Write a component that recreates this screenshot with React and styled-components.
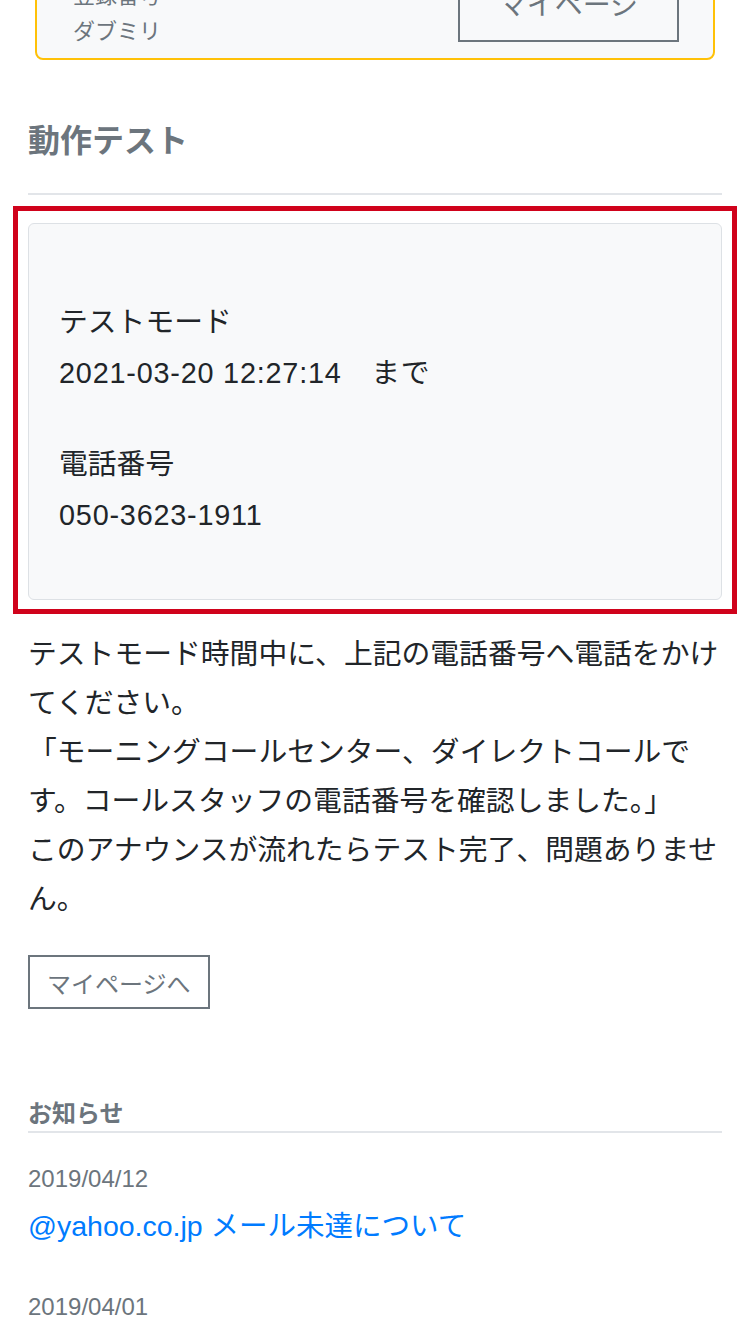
import React from "react";
import styled, { createGlobalStyle } from "styled-components";

const GlobalStyle = createGlobalStyle`
  html, body { margin: 0; padding: 0; background: #ffffff; }
  body {
    font-family: "Liberation Sans", "Noto Sans CJK JP", sans-serif;
    color: #212529;
    -webkit-font-smoothing: antialiased;
  }
`;

const Page = styled.div`
  padding: 0 28px 40px;
  overflow: hidden;
`;

const UserCard = styled.div`
  margin: -58px 7px 0;
  border: 2px solid #ffc107;
  border-radius: 8px;
  background: #f8f9fa;
  display: flex;
  justify-content: space-between;
  align-items: flex-end;
  padding: 20px 34px 0 36px;
`;

const UserInfo = styled.div`
  padding-bottom: 8px;
  color: #6c757d;
  font-size: 22px;
  line-height: 36px;
`;

const OutlineButton = styled.button`
  font-family: inherit;
  background: transparent;
  border: 2px solid #6c757d;
  color: #6c757d;
  cursor: pointer;
  padding: 0 ${(p) => p.$px}px;
  height: ${(p) => p.$h}px;
  font-size: ${(p) => p.$fs}px;
  margin-bottom: ${(p) => p.$mb || 0}px;
  width: ${(p) => (p.$w ? `${p.$w}px` : "auto")};
  display: block;
`;

const SectionTitle = styled.h2`
  margin: 62px 0 0;
  font-size: 32px;
  line-height: 38px;
  font-weight: 700;
  color: #6c757d;
`;

const Rule = styled.hr`
  margin: 33px 0 0;
  border: 0;
  height: 2px;
  background: #e2e5e9;
`;

const Highlight = styled.div`
  margin: 11px -15px 0;
  border: 5px solid #d0021b;
  padding: 12px 10px 9px;
`;

const InfoCard = styled.div`
  background: #f8f9fa;
  border: 1px solid #dde1e5;
  border-radius: 6px;
  padding: 73px 30px 58px;
  display: flex;
  flex-direction: column;
  gap: 40px;
  font-size: 28.8px;
  line-height: 51px;
`;

const InfoBlock = styled.div``;

const Line = styled.div`
  letter-spacing: ${(p) => (p.$num ? "0.8px" : "normal")};
`;

const Body = styled.p`
  margin: 16px 0 0;
  font-size: 28.8px;
  line-height: 49px;
  line-break: strict;
`;

const ButtonRow = styled.div`
  margin-top: 31px;
`;

const NewsTitle = styled.h3`
  margin: 88px 0 0;
  font-size: 24px;
  line-height: 34px;
  font-weight: 700;
  color: #6c757d;
  border-bottom: 2px solid #e2e5e9;
`;

const NewsItem = styled.div`
  margin-top: ${(p) => p.$mt}px;
`;

const NewsDate = styled.div`
  font-size: 24px;
  line-height: 34px;
  color: #6c757d;
`;

const NewsLink = styled.a`
  display: block;
  margin-top: 10px;
  font-size: 28.5px;
  line-height: 40px;
  color: #007bff;
  text-decoration: none;
`;

export default function App() {
  return (
    <>
      <GlobalStyle />
      <Page>
        <UserCard>
          <UserInfo>
            <div>登録番号</div>
            <div>ダブミリ</div>
          </UserInfo>
          <OutlineButton $px={0} $h={78} $fs={28} $mb={16} $w={221}>
            マイページ
          </OutlineButton>
        </UserCard>

        <SectionTitle>動作テスト</SectionTitle>
        <Rule />

        <Highlight>
          <InfoCard>
            <InfoBlock>
              <Line>テストモード</Line>
              <Line $num>2021-03-20 12:27:14　まで</Line>
            </InfoBlock>
            <InfoBlock>
              <Line>電話番号</Line>
              <Line $num>050-3623-1911</Line>
            </InfoBlock>
          </InfoCard>
        </Highlight>

        <Body>
          テストモード時間中に、上記の電話番号へ電話をかけてください。
          <br />
          「モーニングコールセンター、ダイレクトコールです。コールスタッフの電話番号を確認しました。」
          <br />
          このアナウンスが流れたらテスト完了、問題ありません。
        </Body>

        <ButtonRow>
          <OutlineButton $px={17} $h={54} $fs={24}>
            マイページへ
          </OutlineButton>
        </ButtonRow>

        <NewsTitle>お知らせ</NewsTitle>
        <NewsItem $mt={29}>
          <NewsDate>2019/04/12</NewsDate>
          <NewsLink href="#">@yahoo.co.jp メール未達について</NewsLink>
        </NewsItem>
        <NewsItem $mt={44}>
          <NewsDate>2019/04/01</NewsDate>
          <NewsLink href="#">サービス開始のお知らせ</NewsLink>
        </NewsItem>
      </Page>
    </>
  );
}
